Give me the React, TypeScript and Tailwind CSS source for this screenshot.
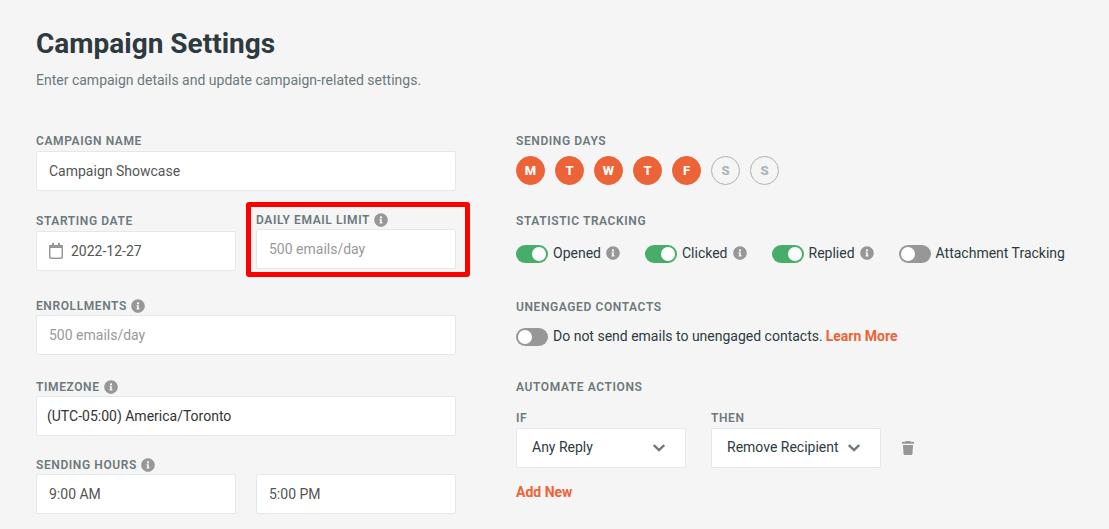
import { useState } from "react";
import type { ReactNode } from "react";
import { FaInfoCircle } from "react-icons/fa";

const DAYS = [
  { id: "mon", letter: "M", name: "Monday" },
  { id: "tue", letter: "T", name: "Tuesday" },
  { id: "wed", letter: "W", name: "Wednesday" },
  { id: "thu", letter: "T", name: "Thursday" },
  { id: "fri", letter: "F", name: "Friday" },
  { id: "sat", letter: "S", name: "Saturday" },
  { id: "sun", letter: "S", name: "Sunday" },
];

const TRACKING = [
  { id: "opened", label: "Opened", info: true },
  { id: "clicked", label: "Clicked", info: true },
  { id: "replied", label: "Replied", info: true },
  { id: "attachment", label: "Attachment Tracking", info: false },
];

const labelClass =
  "flex items-center gap-1 text-xs font-semibold uppercase tracking-wider text-[#6c797c]";

const inputClass =
  "h-10 w-full rounded-xs border border-[#e3e8e8] bg-white px-3 text-sm text-[#555555] outline-none placeholder:text-[#999999]";

const InfoIcon = () => (
  <FaInfoCircle className="size-3.5 shrink-0 text-[#979797]" aria-hidden />
);

const CalendarIcon = () => (
  <svg
    viewBox="0 0 14 16"
    className="h-4 w-3.5 shrink-0"
    fill="none"
    aria-hidden
  >
    <rect
      x="0.75"
      y="2.75"
      width="12.5"
      height="12.5"
      rx="1"
      stroke="#979797"
      strokeWidth="1.5"
    />
    <path d="M0 2h14v3H0z M3 0h2v3H3z M9 0h2v3H9z" fill="#979797" />
  </svg>
);

const TrashIcon = () => (
  <svg viewBox="0 0 12 14" className="h-3.5 w-3" fill="#979797" aria-hidden>
    <path d="M4 0h4l.7.8H12v2H0v-2h3.3z" />
    <path d="M1 4h10l-.6 9a1 1 0 0 1-1 1H2.600a1 1 0 0 1-1-1z" />
  </svg>
);

const Field = ({
  id,
  label,
  info,
  children,
}: {
  id: string;
  label: string;
  info?: boolean;
  children: ReactNode;
}) => (
  <div className="min-w-0">
    <label
      htmlFor={id}
      className={`${labelClass} ${info ? "leading-[18px]" : "leading-5"}`}
    >
      {label}
      {info && <InfoIcon />}
    </label>
    {children}
  </div>
);

const Toggle = ({
  id,
  label,
  checked,
  onChange,
}: {
  id: string;
  label: string;
  checked: boolean;
  onChange: () => void;
}) => (
  <div className="flex items-center gap-[5px]">
    <input
      id={id}
      type="checkbox"
      role="switch"
      checked={checked}
      onChange={onChange}
      className="mt-0.5 flex h-[18px] w-8 shrink-0 cursor-pointer appearance-none items-center rounded-full bg-[#979797] px-0.5 before:size-3.5 before:rounded-full before:bg-white checked:justify-end checked:bg-[#46ae6a]"
    />
    <label htmlFor={id} className="cursor-pointer text-sm text-[#2d3b41]">
      {label}
    </label>
  </div>
);

const ActionSelect = ({
  id,
  label,
  options,
}: {
  id: string;
  label: string;
  options: string[];
}) => (
  <div className="w-[170px]">
    <label htmlFor={id} className={`${labelClass} leading-5`}>
      {label}
    </label>
    <div className="relative">
      <select
        id={id}
        className="h-10 w-full appearance-none rounded-xs border border-[#e3e8e8] bg-white pr-8 pb-0.5 pl-[15px] text-sm text-[#2d3b41] outline-none"
      >
        {options.map((option) => (
          <option key={option}>{option}</option>
        ))}
      </select>
      <svg
        viewBox="0 0 12 8"
        className="pointer-events-none absolute top-4 right-[21px] h-2 w-3"
        fill="none"
        stroke="#6c797c"
        strokeWidth="2.4"
        aria-hidden
      >
        <path d="M.8 1l5.200 5 5.200-5" />
      </svg>
    </div>
  </div>
);

export default function CampaignSettingsPage() {
  const [days, setDays] = useState(["mon", "tue", "wed", "thu", "fri"]);
  const [tracking, setTracking] = useState(["opened", "clicked", "replied"]);
  const [skipUnengaged, setSkipUnengaged] = useState(false);

  const toggleItem = (list: string[], id: string) =>
    list.includes(id) ? list.filter((i) => i !== id) : [...list, id];

  return (
    <main className="min-h-screen bg-[#f5f5f5] px-9 pt-6 pb-4 font-[Roboto,sans-serif]">
      <h1 className="text-[28px] leading-10 font-bold text-[#2d3b41]">
        Campaign Settings
      </h1>
      <p className="mt-1.5 text-sm text-[#6c797c]">
        Enter campaign details and update campaign-related settings.
      </p>

      <form className="mt-[41px] grid grid-cols-[420fr_557fr] gap-x-[60px]">
        <div className="min-w-0">
          <Field id="campaign-name" label="Campaign Name">
            <input
              id="campaign-name"
              className={inputClass}
              defaultValue="Campaign Showcase"
            />
          </Field>

          <div className="mt-5 grid grid-cols-2 items-start gap-5">
            <Field id="starting-date" label="Starting Date">
              <div className="flex h-10 items-center gap-2 rounded-xs border border-[#e3e8e8] bg-white px-3">
                <CalendarIcon />
                <input
                  id="starting-date"
                  className="w-full min-w-0 bg-transparent text-sm text-[#555555] outline-none"
                  defaultValue="2022-12-27"
                />
              </div>
            </Field>
            <div className="relative">
              <Field id="daily-limit" label="Daily Email Limit" info>
                <input
                  id="daily-limit"
                  className={inputClass}
                  placeholder="500 emails/day"
                />
              </Field>
              <div className="pointer-events-none absolute -top-[9px] -right-3.5 -bottom-2 -left-2.5 rounded-[3px] border-5 border-[#ff0000]" />
            </div>
          </div>

          <div className="mt-[26px]">
            <Field id="enrollments" label="Enrollments" info>
              <input
                id="enrollments"
                className={inputClass}
                placeholder="500 emails/day"
              />
            </Field>
          </div>

          <div className="mt-[23px]">
            <Field id="timezone" label="Timezone" info>
              <input
                id="timezone"
                className="h-10 w-full rounded-xs border border-[#e3e8e8] bg-white px-2.5 text-sm text-[#333333] outline-none"
                defaultValue="(UTC-05:00) America/Toronto"
              />
            </Field>
          </div>

          <div className="mt-5">
            <Field id="hours-from" label="Sending Hours" info>
              <div className="grid grid-cols-2 gap-5">
                <input
                  id="hours-from"
                  className={inputClass}
                  defaultValue="9:00 AM"
                />
                <input
                  aria-label="Sending hours end"
                  className={inputClass}
                  defaultValue="5:00 PM"
                />
              </div>
            </Field>
          </div>
        </div>

        <div className="min-w-0">
          <h2 className={`${labelClass} leading-5`}>Sending Days</h2>
          <div className="mt-[5px] flex gap-2.5">
            {DAYS.map((day) => (
              <button
                key={day.id}
                type="button"
                aria-label={day.name}
                aria-pressed={days.includes(day.id)}
                onClick={() => setDays(toggleItem(days, day.id))}
                className={`size-[29px] rounded-full border text-[13px] font-extrabold ${
                  days.includes(day.id)
                    ? "border-[#ec6337] bg-[#ec6337] text-white"
                    : "border-[#aab4b6] text-[#aab4b6]"
                }`}
              >
                {day.letter}
              </button>
            ))}
          </div>

          <h2 className={`${labelClass} mt-[26px] leading-5`}>
            Statistic Tracking
          </h2>
          <div className="mt-3 flex gap-[25px]">
            {TRACKING.map((item) => (
              <div key={item.id} className="flex items-center gap-[5px]">
                <Toggle
                  id={item.id}
                  label={item.label}
                  checked={tracking.includes(item.id)}
                  onChange={() => setTracking(toggleItem(tracking, item.id))}
                />
                {item.info && <InfoIcon />}
              </div>
            ))}
          </div>

          <h2 className={`${labelClass} mt-[34px] leading-5`}>
            Unengaged Contacts
          </h2>
          <div className="mt-[9px] flex items-center gap-[3px]">
            <Toggle
              id="unengaged"
              label="Do not send emails to unengaged contacts."
              checked={skipUnengaged}
              onChange={() => setSkipUnengaged(!skipUnengaged)}
            />
            <a href="#" className="text-sm font-bold text-[#ec6337]">
              Learn More
            </a>
          </div>

          <h2 className={`${labelClass} mt-[31px] leading-5`}>
            Automate Actions
          </h2>
          <div className="mt-[11px] flex items-end gap-[25px]">
            <ActionSelect
              id="action-if"
              label="If"
              options={["Any Reply", "Positive Reply"]}
            />
            <ActionSelect
              id="action-then"
              label="Then"
              options={["Remove Recipient", "Pause Recipient"]}
            />
            <button
              type="button"
              aria-label="Delete action"
              className="-ml-1 flex h-10 items-center"
            >
              <TrashIcon />
            </button>
          </div>
          <button
            type="button"
            className="mt-3.5 block text-sm font-bold text-[#ec6337]"
          >
            Add New
          </button>
        </div>
      </form>
    </main>
  );
}
